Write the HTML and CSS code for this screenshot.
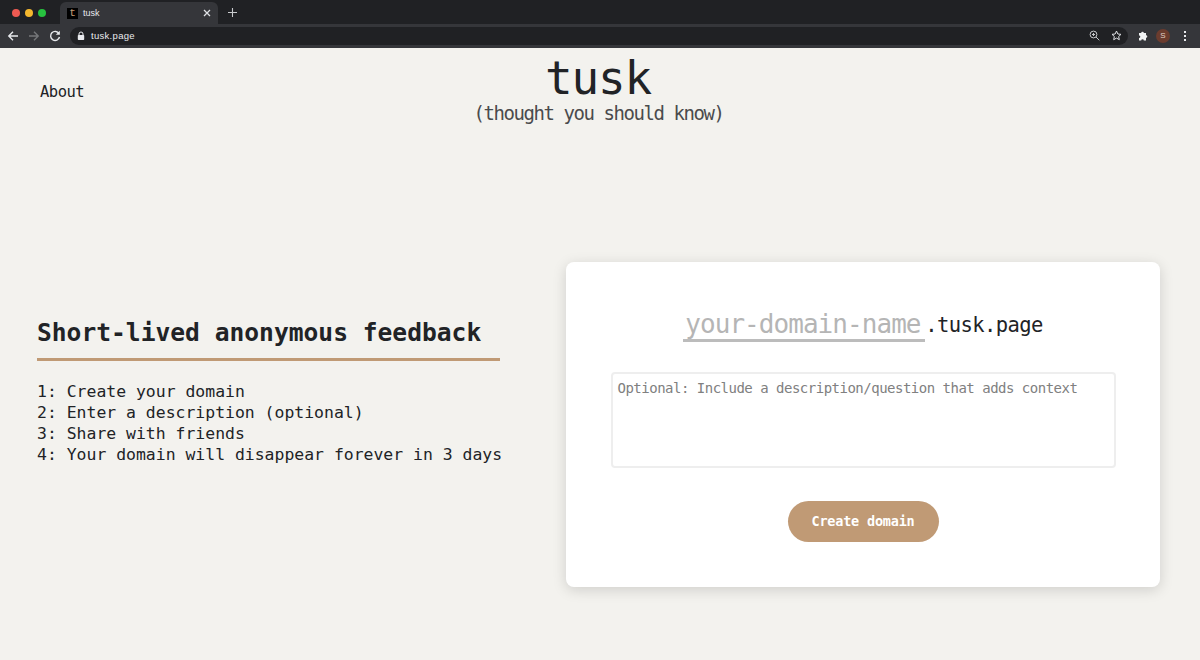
FILE: index.html
```html
<!DOCTYPE html>
<html>
<head>
<title>tusk</title>
<link rel="stylesheet" href="styles.css">
</head>
<body>

<!-- browser chrome -->
<div class="tabstrip">
  <div class="lights">
    <span class="light red"></span>
    <span class="light yellow"></span>
    <span class="light green"></span>
  </div>
  <div class="tab">
    <span class="favicon">t</span>
    <span class="tab-title">tusk</span>
    <svg class="tab-close" width="8" height="8" viewBox="0 0 8 8"><path d="M1 1l6 6M7 1l-6 6" stroke="#dfe1e5" stroke-width="1.3"/></svg>
  </div>
  <svg class="new-tab" width="9" height="9" viewBox="0 0 10 10"><path d="M5 0v10M0 5h10" stroke="#c8cacd" stroke-width="1.2"/></svg>
</div>
<div class="toolbar">
  <svg class="nav-icon" width="12" height="12" viewBox="0 0 12 12"><path d="M11 6H2M6 1.800L1.800 6 6 10.200" fill="none" stroke="#e8eaed" stroke-width="1.400"/></svg>
  <svg class="nav-icon" width="12" height="12" viewBox="0 0 12 12"><path d="M1 6h9M6 1.800L10.200 6 6 10.200" fill="none" stroke="#75777a" stroke-width="1.400"/></svg>
  <svg class="nav-icon" width="12" height="12" viewBox="0 0 12 12"><path d="M10 3.600A4.500 4.500 0 1 0 10.500 7" fill="none" stroke="#e8eaed" stroke-width="1.400"/><path d="M10.800 0.800v4h-4z" fill="#e8eaed"/></svg>
  <div class="omnibox">
    <svg width="8" height="10" viewBox="0 0 8 10"><path d="M2 4.500V3a2 2 0 0 1 4 0v1.500" fill="none" stroke="#e8eaed" stroke-width="1"/><rect x="0.800" y="4" width="6.400" height="5" rx="0.800" fill="#e8eaed"/></svg>
    <span class="url">tusk.page</span>
    <svg class="zoom-icon" width="11" height="11" viewBox="0 0 11 11"><circle cx="4.500" cy="4.500" r="3.400" fill="none" stroke="#c4c6c9" stroke-width="1"/><path d="M7 7l3.300 3.300M3 4.500h3M4.500 3v3" stroke="#c4c6c9" stroke-width="1"/></svg>
    <svg width="11" height="11" viewBox="0 0 11 11"><path d="M5.500 1l1.350 3 3.150.35-2.350 2.150.65 3.200L5.500 8.100 2.700 9.700l.65-3.200L1 4.350 4.150 4z" fill="none" stroke="#dfe1e5" stroke-width="1"/></svg>
  </div>
  <svg class="puzzle" width="11" height="11" viewBox="0 0 11 11"><path d="M1 3h2.200a1.300 1.300 0 1 1 2.600 0H8v2.200a1.300 1.300 0 1 1 0 2.600V10.500H5.800a1.300 1.300 0 1 0-2.600 0H1V8a1.300 1.300 0 1 0 0-2.600z" fill="#f1f3f4"/></svg>
  <span class="avatar">S</span>
  <span class="menu-dots"><i></i><i></i><i></i></span>
</div>

<div class="page">
  <div class="header">
    <a class="about" href="#">About</a>
    <div class="brand">
      <h1>tusk</h1>
      <p>(thought you should know)</p>
    </div>
  </div>

  <div class="content">
    <div class="intro">
      <h2>Short-lived anonymous feedback</h2>
      <ul>
        <li>1: Create your domain</li>
        <li>2: Enter a description (optional)</li>
        <li>3: Share with friends</li>
        <li>4: Your domain will disappear forever in 3 days</li>
      </ul>
    </div>

    <div class="card">
      <div class="domain-row">
        <span class="domain-input">your-domain-name</span><span class="domain-suffix">.tusk.page</span>
      </div>
      <div class="description">Optional: Include a description/question that adds context</div>
      <a class="create-btn" href="#">Create domain</a>
    </div>
  </div>
</div>

</body>
</html>
```

FILE: styles.css
```css
* {box-sizing: border-box;}

body {
    margin: 0;
    height: 660px;
    overflow: hidden;
    background: #f3f2ee;
    font-family: "DejaVu Sans Mono", monospace;
    color: #212326;
}

/* browser chrome */
.tabstrip {
    height: 24px;
    background: #202124;
    display: flex;
    align-items: flex-end;
    font-family: "Liberation Sans", sans-serif;
}

.lights {
    display: flex;
    gap: 5px;
    padding: 0 0 7px 12px;
    width: 60px;
}

.light {
    width: 8px;
    height: 8px;
    border-radius: 50%;
}

.red {background: #ee5a52;}
.yellow {background: #f5b82e;}
.green {background: #27c23f;}

.tab {
    width: 158px;
    height: 22px;
    background: #35363a;
    border-radius: 6px 6px 0 0;
    display: flex;
    align-items: center;
    padding: 0 7px 0 7px;
    font-size: 9px;
    color: #e8eaed;
}

.favicon {
    width: 11px;
    height: 11px;
    background: #000;
    color: #c29a73;
    font-family: "Liberation Mono", monospace;
    font-size: 11px;
    line-height: 11px;
    text-align: center;
    margin-right: 5px;
}

.tab-title {flex: 1;}

.new-tab {margin: 0 0 7px 10px;}

.toolbar {
    height: 24px;
    background: #35363a;
    display: flex;
    align-items: center;
    padding: 0 0 1px 7px;
    font-family: "Liberation Sans", sans-serif;
}

.nav-icon {margin-right: 9px;}

.omnibox {
    width: 1058px;
    height: 18px;
    background: #202124;
    border-radius: 9px;
    display: flex;
    align-items: center;
    padding: 0 6px 0 7px;
    gap: 6px;
}

.url {
    flex: 1;
    font-size: 9.500px;
    letter-spacing: 0.300px;
    color: #e8eaed;
}

.zoom-icon {margin-right: 5px;}

.puzzle {margin-left: 10px;}

.avatar {
    width: 14px;
    height: 14px;
    margin-left: 7px;
    border-radius: 50%;
    background: #6b3c2e;
    color: #e0d0c8;
    font-size: 8px;
    line-height: 14px;
    text-align: center;
}

.menu-dots {
    display: flex;
    flex-direction: column;
    gap: 2px;
    margin-left: 14px;
}

.menu-dots i {
    width: 2px;
    height: 2px;
    background: #e8eaed;
    display: block;
}

/* page */
.page {
    padding: 0 40px 0 37px;
}

.header {
    position: relative;
    height: 214px;
    text-align: center;
}

.about {
    position: absolute;
    left: 3px;
    top: 35px;
    font-size: 15.500px;
    letter-spacing: -0.500px;
    color: #212326;
    text-decoration: none;
}

.brand {
    padding: 5px 0 0 0;
    margin-left: 0;
}

.brand h1 {
    margin: 0 1px 0 0;
    font-size: 46px;
    font-weight: normal;
    line-height: 50px;
    letter-spacing: -1.200px;
}

.brand p {
    margin: 0;
    font-size: 19px;
    line-height: 21px;
    letter-spacing: -1.440px;
    color: #4a4b4d;
}

.content {
    display: flex;
    align-items: flex-start;
}

.intro {
    width: 529px;
    padding-top: 55px;
}

.intro h2 {
    width: 463px;
    margin: 0 0 20px 0;
    padding-bottom: 10px;
    border-bottom: 3px solid #c09a75;
    font-size: 24.600px;
    line-height: 31px;
    white-space: nowrap;
}

.intro ul {
    list-style-type: none;
    margin: 0;
    padding: 0;
    font-size: 16.450px;
    line-height: 21px;
    white-space: nowrap;
}

.card {
    width: 594px;
    height: 325px;
    background: #fff;
    border-radius: 8px;
    box-shadow: 0 3px 14px rgba(0,0,0,0.15);
    padding: 48px 45px 0 45px;
    display: flex;
    flex-direction: column;
    align-items: center;
}

.domain-row {
    display: flex;
    align-items: flex-end;
    font-size: 20.500px;
}

.domain-input {
    width: 242px;
    height: 32px;
    border-bottom: 3px solid #bcbcbc;
    padding: 0 0 0 2px;
    font-size: 26px;
    line-height: 28px;
    letter-spacing: -0.950px;
    color: #b5b5b5;
    white-space: nowrap;
}

.domain-suffix {
    line-height: 28px;
    height: 31px;
    color: #212326;
    letter-spacing: -0.600px;
}

.description {
    width: 505px;
    height: 96px;
    margin-top: 30px;
    border: 2px solid #eeeeee;
    border-radius: 4px;
    padding: 5px 5px;
    font-size: 14px;
    line-height: 18px;
    letter-spacing: -0.500px;
    color: #808080;
    white-space: nowrap;
}

.create-btn {
    width: 151px;
    height: 41px;
    margin-top: 33px;
    border-radius: 21px;
    background: #c09a75;
    color: #fff;
    font-size: 13.500px;
    font-weight: bold;
    line-height: 41px;
    letter-spacing: -0.200px;
    text-align: center;
    text-decoration: none;
}
```
